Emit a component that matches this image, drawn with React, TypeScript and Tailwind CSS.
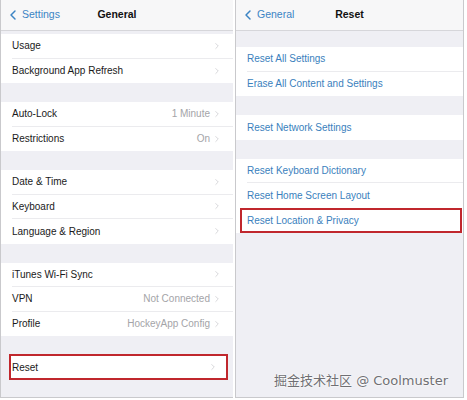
import { ChevronLeft, ChevronRight } from "lucide-react";

type Row = { label: string; value?: string };

function NavBar({ back, title }: { back: string; title: string }) {
  return (
    <div className="relative h-[31px] flex items-center bg-[#f7f7f8] border-b border-[#d6d6da]">
      <div className="flex items-center pl-[4px] text-[#3b84c4]">
        <ChevronLeft className="h-[16px] w-[16px]" strokeWidth={2.2} />
        <span className="text-[10.5px] ml-[1px]">{back}</span>
      </div>
      <div className="absolute inset-x-0 text-center text-[10.5px] font-bold text-[#111] pointer-events-none">
        {title}
      </div>
    </div>
  );
}

function Group({ rows, blue, chevron }: { rows: Row[]; blue?: boolean; chevron?: boolean }) {
  return (
    <div className="bg-white">
      {rows.map((r, i) => (
        <div key={r.label} className="pl-[11px]">
          <div
            className={
              "h-[24.5px] flex items-center pr-[11px] " +
              (i < rows.length - 1 ? "border-b border-[#ebebee]" : "")
            }
          >
            <span className={"text-[10px] flex-1 " + (blue ? "text-[#3a7fbd]" : "text-[#1a1a1a]")}>
              {r.label}
            </span>
            {r.value && <span className="text-[10px] text-[#a4a4a8] mr-[2px]">{r.value}</span>}
            {chevron && <ChevronRight className="h-[10px] w-[10px] text-[#c4c4c8]" strokeWidth={1.6} />}
          </div>
        </div>
      ))}
    </div>
  );
}

export default function App() {
  return (
    <div
      className="relative w-[467px] h-[400px] bg-white flex"
      style={{ fontFamily: '"Liberation Sans", Arial, sans-serif' }}
    >
      {/* left screen: General */}
      <div className="w-[233px] h-[398px] bg-[#efeff4] border-l border-b border-[#c9c9cc]">
        <NavBar back="Settings" title="General" />
        <div className="h-[3px]" />
        <Group chevron rows={[{ label: "Usage" }, { label: "Background App Refresh" }]} />
        <div className="h-[19px]" />
        <Group
          chevron
          rows={[
            { label: "Auto-Lock", value: "1 Minute" },
            { label: "Restrictions", value: "On" },
          ]}
        />
        <div className="h-[19px]" />
        <Group
          chevron
          rows={[{ label: "Date & Time" }, { label: "Keyboard" }, { label: "Language & Region" }]}
        />
        <div className="h-[19px]" />
        <Group
          chevron
          rows={[
            { label: "iTunes Wi-Fi Sync" },
            { label: "VPN", value: "Not Connected" },
            { label: "Profile", value: "HockeyApp Config" },
          ]}
        />
        <div className="h-[18px]" />
        <div className="ml-[8px] mr-[5px] border-2 border-[#c0272d] bg-white">
          <div className="h-[22px] flex items-center pl-[1px] pr-[8px]">
            <span className="text-[10px] flex-1 text-[#1a1a1a]">Reset</span>
            <ChevronRight className="h-[10px] w-[10px] text-[#c4c4c8]" strokeWidth={1.6} />
          </div>
        </div>
      </div>

      <div className="w-[2px]" />

      {/* right screen: Reset */}
      <div className="w-[229px] h-[398px] bg-[#efeff4] border-l border-r border-b border-[#c9c9cc]">
        <NavBar back="General" title="Reset" />
        <div className="h-[16px]" />
        <Group blue rows={[{ label: "Reset All Settings" }, { label: "Erase All Content and Settings" }]} />
        <div className="h-[19px]" />
        <Group blue rows={[{ label: "Reset Network Settings" }]} />
        <div className="h-[19px]" />
        <div className="bg-white">
          <Group blue rows={[{ label: "Reset Keyboard Dictionary" }, { label: "Reset Home Screen Layout" }]} />
          <div className="ml-[4px] mr-[1px] border-2 border-[#c0272d] bg-white">
            <div className="h-[21px] flex items-center pl-[5px]">
              <span className="text-[10px] text-[#3a7fbd]">Reset Location &amp; Privacy</span>
            </div>
          </div>
        </div>
      </div>

      {/* watermark */}
      <div
        className="absolute left-[274px] top-[371px] text-[13px] text-[#6f6f73]"
        style={{
          fontFamily: '"DejaVu Sans", "Noto Sans CJK SC", sans-serif',
          textShadow: "0 0 2px #fff, 0 0 2px #fff",
        }}
      >
        掘金技术社区 @ Coolmuster
      </div>
    </div>
  );
}
